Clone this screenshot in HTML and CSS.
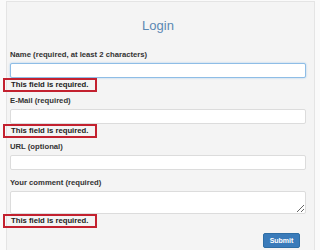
FILE: index.html
```html
<!DOCTYPE html>
<html lang="en">
<head>
  <meta charset="UTF-8" />
  <meta name="viewport" content="width=device-width, initial-scale=1.0" />
  <title>Login</title>
  <link rel="stylesheet" href="styles.css">
</head>
<body>
  <div class="panel">
    <h1 class="panel-title">Login</h1>

    <form class="login-form" onsubmit="return false">
      <div class="field">
        <label for="name">Name (required, at least 2 characters)</label>
        <input type="text" id="name" class="focused">
        <span class="error">This field is required.</span>
      </div>

      <div class="field">
        <label for="email">E-Mail (required)</label>
        <input type="text" id="email">
        <span class="error">This field is required.</span>
      </div>

      <div class="field field-plain">
        <label for="url">URL (optional)</label>
        <input type="text" id="url">
      </div>

      <div class="field">
        <label for="comment">Your comment (required)</label>
        <textarea id="comment"></textarea>
        <span class="error">This field is required.</span>
      </div>

      <div class="actions">
        <button type="submit">Submit</button>
      </div>
    </form>
  </div>
</body>
</html>
```

FILE: styles.css
```css
html, body {
  height: 100%;
}
body {
  background-color: #fafafa;
  font-family: 'Liberation Sans', Arial, sans-serif;
  margin: 0;
  padding: 0;
  overflow: hidden;
}
.panel {
  box-sizing: border-box;
  width: 309px;
  min-height: 260px;
  margin: 1px 0 0 6px;
  padding: 0 8px 0 3px;
  background-color: #f4f4f4;
  border: 1px solid #e4e4e4;
}
.panel-title {
  margin: 0;
  padding-top: 17px;
  height: 14px;
  line-height: 14px;
  text-align: center;
  font-size: 13px;
  font-weight: normal;
  color: #5b88b3;
}
.login-form {
  margin-top: 17px;
}
.field {
  margin-bottom: 4px;
}
.field-plain {
  margin-bottom: 8px;
}
.field label {
  display: block;
  height: 10px;
  line-height: 10px;
  margin-bottom: 3px;
  font-size: 7.7px;
  font-weight: bold;
  color: #333;
}
.field input[type="text"],
.field textarea {
  display: block;
  box-sizing: border-box;
  width: 296px;
  height: 15px;
  margin: 0;
  padding: 0 4px;
  background: #fff;
  border: 1px solid #dcdcdc;
  border-radius: 2px;
  font-family: inherit;
  font-size: 8px;
}
.field textarea {
  height: 23px;
  resize: vertical;
}
.field input.focused {
  border-color: #8ebde6;
  box-shadow: 0 0 2px rgba(102, 175, 233, 0.6);
}
.error {
  display: block;
  width: fit-content;
  box-sizing: border-box;
  height: 14px;
  line-height: 10px;
  margin-left: -7px;
  padding: 0 7px 0 6px;
  border: 2px solid #c3212f;
  font-size: 7.7px;
  font-weight: bold;
  color: #222;
}
.actions {
  display: flex;
  justify-content: flex-end;
  padding-right: 6px;
  margin-top: 5px;
}
.actions button {
  width: 37px;
  height: 15px;
  padding: 0;
  background-color: #3a7bba;
  border: 1px solid #2e6da4;
  border-radius: 2px;
  color: #fff;
  font-family: inherit;
  font-size: 7px;
  font-weight: bold;
}
```
